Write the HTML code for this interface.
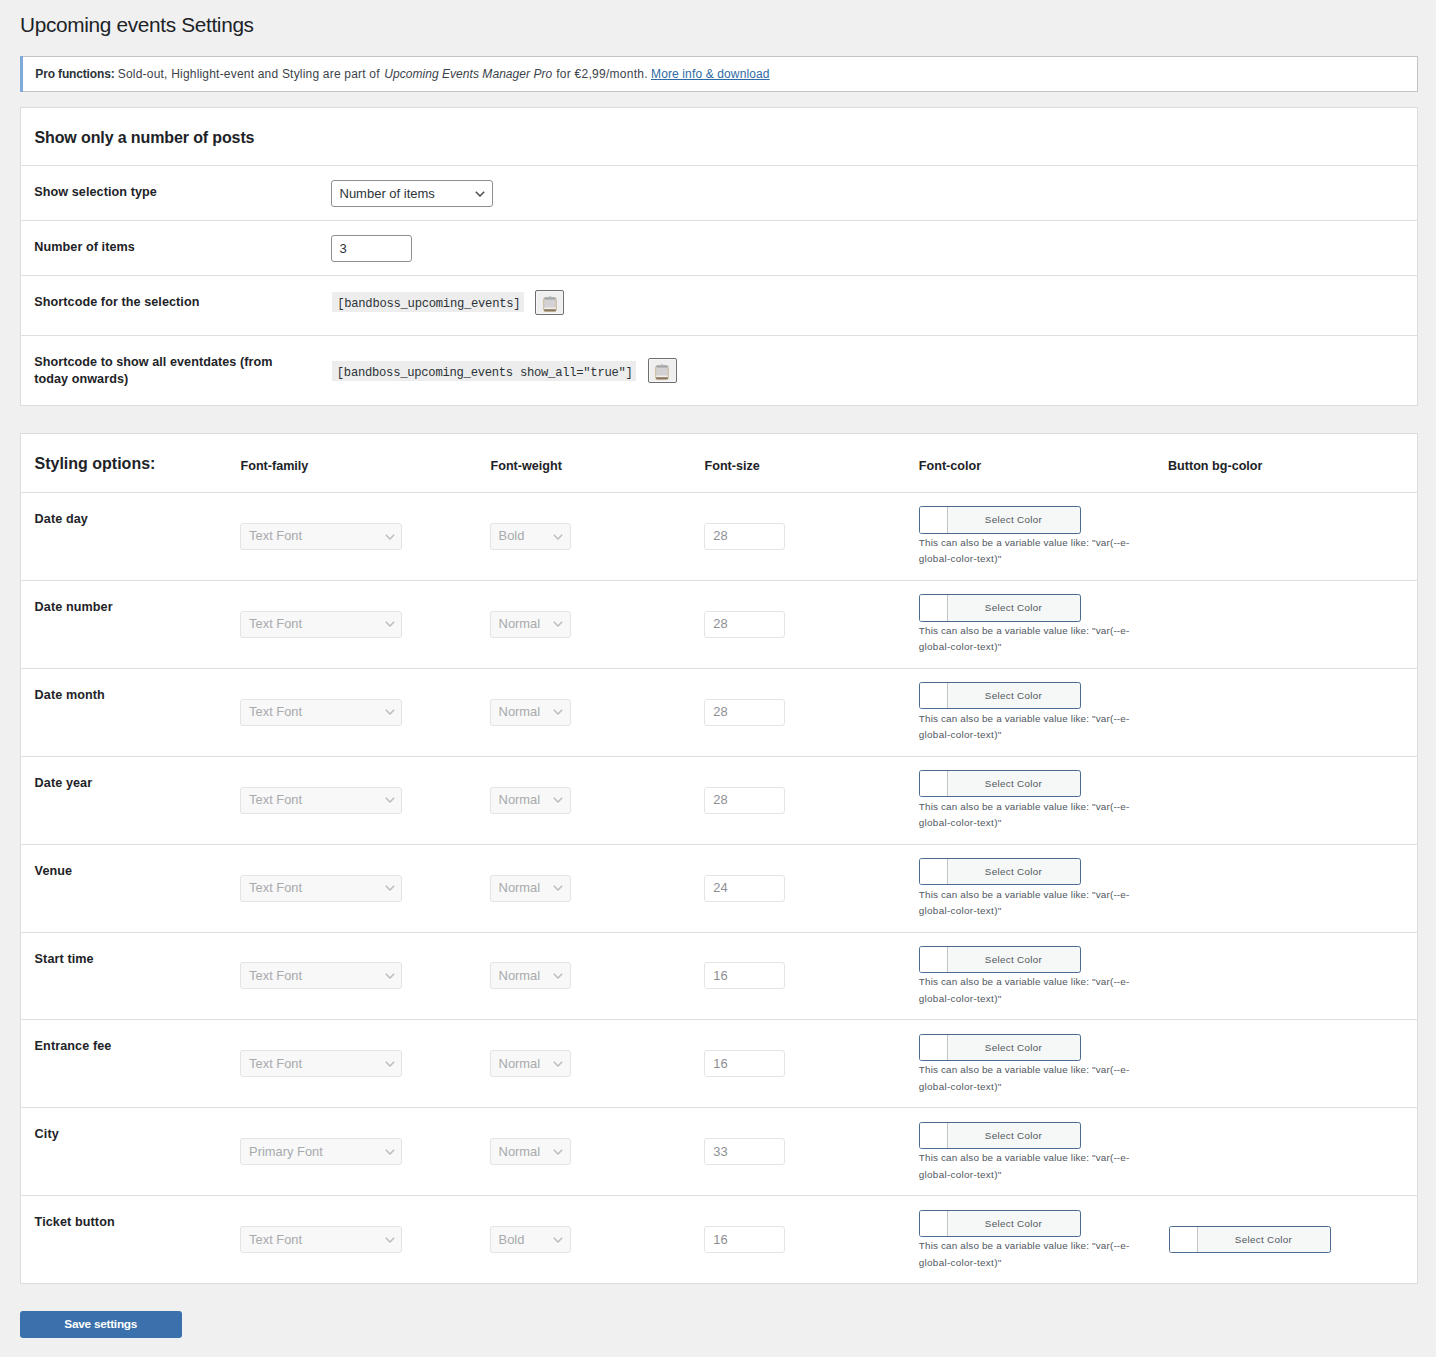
<!DOCTYPE html>
<html><head><meta charset="utf-8"><title>Upcoming events Settings</title><style>
html,body{margin:0;padding:0}
body{width:1436px;height:1357px;overflow:hidden;position:relative;background:#f0f0f1;font-family:"Liberation Sans",sans-serif;color:#1d2327}
.a{position:absolute;white-space:nowrap}
.t{position:absolute;white-space:nowrap}
.box{position:absolute;left:20px;width:1396px;background:#fff;border:1px solid #dcdcdc}
.hr{position:absolute;left:21px;width:1396px;height:1px;background:#dfdfdf}
.sel{position:absolute;box-sizing:border-box;height:27px;border:1px solid #8c8f94;border-radius:3px;background:#fff}
.dsel{position:absolute;box-sizing:border-box;height:27px;border:1px solid #e4e4e5;border-radius:3px;background:#f8f8f8}
.inp{position:absolute;box-sizing:border-box;height:27px;border:1px solid #e4e4e5;border-radius:3px;background:#fff}
.chev{position:absolute;width:10px;height:6px}
.code{position:absolute;height:20px;background:#ededed}
.cb{position:absolute;box-sizing:border-box;width:29px;height:25px;border:1px solid #6e6e6e;border-radius:2px;background:#efefef;box-shadow:inset 0 0 0 1px #f7f7f7}
.cp{position:absolute;box-sizing:border-box;width:162px;height:28px;border:1px solid #4b6b90;border-radius:2.5px;background:#f6f7f7;overflow:hidden}
.cp i{position:absolute;left:0;top:0;width:27px;height:26px;background:#fff;border-right:1px solid #c3c4c7}
.btn{position:absolute;left:20px;top:1311px;width:162px;height:27px;background:#3a70ab;border-radius:3px}
</style></head><body>
<div class="t" style="left:20.00px;top:14.59px;font-size:20.8px;line-height:20.8px;letter-spacing:-0.33px;">Upcoming events Settings</div>
<div class="a" style="left:20px;top:56px;width:1396px;height:34px;background:#fff;border:1px solid #c3c4c7;"></div>
<div class="a" style="left:20px;top:56px;width:3px;height:36px;background:#80aad8"></div>
<div class="t" style="left:35.30px;top:68.44px;font-size:12px;line-height:12px;font-weight:700;color:#2c3338;letter-spacing:-0.15px;">Pro functions:</div>
<div class="t" style="left:117.80px;top:68.44px;font-size:12px;line-height:12px;color:#3c434a;letter-spacing:0.2px;">Sold-out, Highlight-event and Styling are part of</div>
<div class="t" style="left:384.20px;top:68.44px;font-size:12px;line-height:12px;color:#3c434a;letter-spacing:0.05px;font-style:italic;">Upcoming Events Manager Pro</div>
<div class="t" style="left:556.20px;top:68.44px;font-size:12px;line-height:12px;color:#3c434a;letter-spacing:0.27px;">for €2,99/month.</div>
<div class="t" style="left:651.00px;top:68.44px;font-size:12px;line-height:12px;color:#2f6aa5;letter-spacing:0.13px;text-decoration:underline;">More info &amp; download</div>
<div class="box" style="top:107px;height:297px"></div>
<div class="t" style="left:34.50px;top:129.56px;font-size:16px;line-height:16px;font-weight:700;letter-spacing:-0.12px;">Show only a number of posts</div>
<div class="hr" style="top:165px"></div>
<div class="hr" style="top:220px"></div>
<div class="hr" style="top:275px"></div>
<div class="hr" style="top:335px"></div>
<div class="t" style="left:34.30px;top:186.33px;font-size:12.6px;line-height:12.6px;font-weight:700;letter-spacing:0.08px;">Show selection type</div>
<div class="sel" style="left:331px;top:180px;width:162px"></div>
<div class="t" style="left:339.50px;top:186.80px;font-size:13px;line-height:13px;color:#2c3338;">Number of items</div>
<svg class="chev" style="left:475.0px;top:191.0px" viewBox="0 0 10 6"><path d="M0.8 0.8 L5 5 L9.2 0.8" fill="none" stroke="#4a4f54" stroke-width="1.5"/></svg>
<div class="t" style="left:34.30px;top:241.33px;font-size:12.6px;line-height:12.6px;font-weight:700;letter-spacing:0.08px;">Number of items</div>
<div class="sel" style="left:331px;top:235px;width:81px"></div>
<div class="t" style="left:339.50px;top:241.70px;font-size:13px;line-height:13px;color:#2c3338;">3</div>
<div class="t" style="left:34.30px;top:296.33px;font-size:12.6px;line-height:12.6px;font-weight:700;letter-spacing:0.08px;">Shortcode for the selection</div>
<div class="code" style="left:332px;top:292px;width:192px"></div>
<div class="t" style="left:337.20px;top:297.95px;font-size:12.2px;line-height:12.2px;color:#2c3338;letter-spacing:-0.27px;font-family:'Liberation Mono',monospace;">[bandboss_upcoming_events]</div>
<div class="cb" style="left:535px;top:290px"><svg style="position:absolute;left:6px;top:4px" width="15" height="17" viewBox="0 0 15 17"><rect x="1.7" y="2.8" width="12.6" height="13.6" rx="1.6" fill="#d3d1d4" stroke="#c8b48e" stroke-width="0.9"/><rect x="2.2" y="12.6" width="11.6" height="1.2" fill="#fbf6ec"/><rect x="2.0" y="14.2" width="12" height="2.0" rx="0.8" fill="#8c7a62"/><rect x="2.4" y="2.6" width="11.2" height="1.8" rx="0.6" fill="#9ea3a8"/><rect x="6.6" y="1.2" width="2.8" height="2" rx="1" fill="#b3b7bb"/></svg></div>
<div class="t" style="left:34.30px;top:355.93px;font-size:12.6px;line-height:12.6px;font-weight:700;letter-spacing:0.06px;">Shortcode to show all eventdates (from</div>
<div class="t" style="left:34.30px;top:372.73px;font-size:12.6px;line-height:12.6px;font-weight:700;letter-spacing:0.06px;">today onwards)</div>
<div class="code" style="left:332px;top:361px;width:304px"></div>
<div class="t" style="left:336.80px;top:366.95px;font-size:12.2px;line-height:12.2px;color:#2c3338;letter-spacing:-0.27px;font-family:'Liberation Mono',monospace;">[bandboss_upcoming_events show_all="true"]</div>
<div class="cb" style="left:648px;top:358px"><svg style="position:absolute;left:5px;top:4px" width="15" height="17" viewBox="0 0 15 17"><rect x="1.7" y="2.8" width="12.6" height="13.6" rx="1.6" fill="#d3d1d4" stroke="#c8b48e" stroke-width="0.9"/><rect x="2.2" y="12.6" width="11.6" height="1.2" fill="#fbf6ec"/><rect x="2.0" y="14.2" width="12" height="2.0" rx="0.8" fill="#8c7a62"/><rect x="2.4" y="2.6" width="11.2" height="1.8" rx="0.6" fill="#9ea3a8"/><rect x="6.6" y="1.2" width="2.8" height="2" rx="1" fill="#b3b7bb"/></svg></div>
<div class="box" style="top:433px;height:849px"></div>
<div class="t" style="left:34.50px;top:456.46px;font-size:16px;line-height:16px;font-weight:700;">Styling options:</div>
<div class="t" style="left:240.50px;top:460.33px;font-size:12.6px;line-height:12.6px;font-weight:700;">Font-family</div>
<div class="t" style="left:490.50px;top:460.33px;font-size:12.6px;line-height:12.6px;font-weight:700;">Font-weight</div>
<div class="t" style="left:704.50px;top:460.33px;font-size:12.6px;line-height:12.6px;font-weight:700;">Font-size</div>
<div class="t" style="left:918.80px;top:460.33px;font-size:12.6px;line-height:12.6px;font-weight:700;">Font-color</div>
<div class="t" style="left:1168.00px;top:460.33px;font-size:12.6px;line-height:12.6px;font-weight:700;">Button bg-color</div>
<div class="hr" style="top:492px"></div>
<div class="t" style="left:34.60px;top:512.73px;font-size:12.6px;line-height:12.6px;font-weight:700;letter-spacing:0.1px;">Date day</div>
<div class="dsel" style="left:240px;top:523px;width:162px"></div>
<div class="t" style="left:249.10px;top:530.48px;font-size:12.9px;line-height:12.9px;color:#a7aaad;">Text Font</div>
<svg class="chev" style="left:385.0px;top:533.5px" viewBox="0 0 10 6"><path d="M0.8 0.8 L5 5 L9.2 0.8" fill="none" stroke="#bdbdbd" stroke-width="1.5"/></svg>
<div class="dsel" style="left:490px;top:523px;width:81px"></div>
<div class="t" style="left:498.60px;top:530.48px;font-size:12.9px;line-height:12.9px;color:#a7aaad;">Bold</div>
<svg class="chev" style="left:553.0px;top:533.5px" viewBox="0 0 10 6"><path d="M0.8 0.8 L5 5 L9.2 0.8" fill="none" stroke="#bdbdbd" stroke-width="1.5"/></svg>
<div class="inp" style="left:704px;top:523px;width:81px"></div>
<div class="t" style="left:713.20px;top:530.48px;font-size:12.9px;line-height:12.9px;color:#8c8f94;letter-spacing:0.2px;">28</div>
<div class="cp" style="left:919px;top:506px;height:28px"><i style="height:26px"></i></div>
<div class="t" style="left:984.80px;top:514.92px;font-size:9.9px;line-height:9.9px;color:#50575e;letter-spacing:0.29px;">Select Color</div>
<div class="t" style="left:918.80px;top:537.92px;font-size:9.9px;line-height:9.9px;color:#50575e;letter-spacing:0.16px;">This can also be a variable value like: "var(--e-</div>
<div class="t" style="left:918.80px;top:554.42px;font-size:9.9px;line-height:9.9px;color:#50575e;letter-spacing:0.3px;">global-color-text)"</div>
<div class="hr" style="top:580px"></div>
<div class="t" style="left:34.60px;top:600.73px;font-size:12.6px;line-height:12.6px;font-weight:700;letter-spacing:0.1px;">Date number</div>
<div class="dsel" style="left:240px;top:611px;width:162px"></div>
<div class="t" style="left:249.10px;top:618.38px;font-size:12.9px;line-height:12.9px;color:#a7aaad;">Text Font</div>
<svg class="chev" style="left:385.0px;top:621.4px" viewBox="0 0 10 6"><path d="M0.8 0.8 L5 5 L9.2 0.8" fill="none" stroke="#bdbdbd" stroke-width="1.5"/></svg>
<div class="dsel" style="left:490px;top:611px;width:81px"></div>
<div class="t" style="left:498.60px;top:618.38px;font-size:12.9px;line-height:12.9px;color:#a7aaad;">Normal</div>
<svg class="chev" style="left:553.0px;top:621.4px" viewBox="0 0 10 6"><path d="M0.8 0.8 L5 5 L9.2 0.8" fill="none" stroke="#bdbdbd" stroke-width="1.5"/></svg>
<div class="inp" style="left:704px;top:611px;width:81px"></div>
<div class="t" style="left:713.20px;top:618.38px;font-size:12.9px;line-height:12.9px;color:#8c8f94;letter-spacing:0.2px;">28</div>
<div class="cp" style="left:919px;top:594px;height:28px"><i style="height:26px"></i></div>
<div class="t" style="left:984.80px;top:602.92px;font-size:9.9px;line-height:9.9px;color:#50575e;letter-spacing:0.29px;">Select Color</div>
<div class="t" style="left:918.80px;top:625.82px;font-size:9.9px;line-height:9.9px;color:#50575e;letter-spacing:0.16px;">This can also be a variable value like: "var(--e-</div>
<div class="t" style="left:918.80px;top:642.32px;font-size:9.9px;line-height:9.9px;color:#50575e;letter-spacing:0.3px;">global-color-text)"</div>
<div class="hr" style="top:668px"></div>
<div class="t" style="left:34.60px;top:688.73px;font-size:12.6px;line-height:12.6px;font-weight:700;letter-spacing:0.1px;">Date month</div>
<div class="dsel" style="left:240px;top:699px;width:162px"></div>
<div class="t" style="left:249.10px;top:706.28px;font-size:12.9px;line-height:12.9px;color:#a7aaad;">Text Font</div>
<svg class="chev" style="left:385.0px;top:709.3px" viewBox="0 0 10 6"><path d="M0.8 0.8 L5 5 L9.2 0.8" fill="none" stroke="#bdbdbd" stroke-width="1.5"/></svg>
<div class="dsel" style="left:490px;top:699px;width:81px"></div>
<div class="t" style="left:498.60px;top:706.28px;font-size:12.9px;line-height:12.9px;color:#a7aaad;">Normal</div>
<svg class="chev" style="left:553.0px;top:709.3px" viewBox="0 0 10 6"><path d="M0.8 0.8 L5 5 L9.2 0.8" fill="none" stroke="#bdbdbd" stroke-width="1.5"/></svg>
<div class="inp" style="left:704px;top:699px;width:81px"></div>
<div class="t" style="left:713.20px;top:706.28px;font-size:12.9px;line-height:12.9px;color:#8c8f94;letter-spacing:0.2px;">28</div>
<div class="cp" style="left:919px;top:682px;height:27px"><i style="height:25px"></i></div>
<div class="t" style="left:984.80px;top:690.92px;font-size:9.9px;line-height:9.9px;color:#50575e;letter-spacing:0.29px;">Select Color</div>
<div class="t" style="left:918.80px;top:713.72px;font-size:9.9px;line-height:9.9px;color:#50575e;letter-spacing:0.16px;">This can also be a variable value like: "var(--e-</div>
<div class="t" style="left:918.80px;top:730.22px;font-size:9.9px;line-height:9.9px;color:#50575e;letter-spacing:0.3px;">global-color-text)"</div>
<div class="hr" style="top:756px"></div>
<div class="t" style="left:34.60px;top:776.73px;font-size:12.6px;line-height:12.6px;font-weight:700;letter-spacing:0.1px;">Date year</div>
<div class="dsel" style="left:240px;top:787px;width:162px"></div>
<div class="t" style="left:249.10px;top:794.18px;font-size:12.9px;line-height:12.9px;color:#a7aaad;">Text Font</div>
<svg class="chev" style="left:385.0px;top:797.2px" viewBox="0 0 10 6"><path d="M0.8 0.8 L5 5 L9.2 0.8" fill="none" stroke="#bdbdbd" stroke-width="1.5"/></svg>
<div class="dsel" style="left:490px;top:787px;width:81px"></div>
<div class="t" style="left:498.60px;top:794.18px;font-size:12.9px;line-height:12.9px;color:#a7aaad;">Normal</div>
<svg class="chev" style="left:553.0px;top:797.2px" viewBox="0 0 10 6"><path d="M0.8 0.8 L5 5 L9.2 0.8" fill="none" stroke="#bdbdbd" stroke-width="1.5"/></svg>
<div class="inp" style="left:704px;top:787px;width:81px"></div>
<div class="t" style="left:713.20px;top:794.18px;font-size:12.9px;line-height:12.9px;color:#8c8f94;letter-spacing:0.2px;">28</div>
<div class="cp" style="left:919px;top:770px;height:27px"><i style="height:25px"></i></div>
<div class="t" style="left:984.80px;top:778.92px;font-size:9.9px;line-height:9.9px;color:#50575e;letter-spacing:0.29px;">Select Color</div>
<div class="t" style="left:918.80px;top:801.62px;font-size:9.9px;line-height:9.9px;color:#50575e;letter-spacing:0.16px;">This can also be a variable value like: "var(--e-</div>
<div class="t" style="left:918.80px;top:818.12px;font-size:9.9px;line-height:9.9px;color:#50575e;letter-spacing:0.3px;">global-color-text)"</div>
<div class="hr" style="top:844px"></div>
<div class="t" style="left:34.60px;top:864.73px;font-size:12.6px;line-height:12.6px;font-weight:700;letter-spacing:0.1px;">Venue</div>
<div class="dsel" style="left:240px;top:875px;width:162px"></div>
<div class="t" style="left:249.10px;top:882.08px;font-size:12.9px;line-height:12.9px;color:#a7aaad;">Text Font</div>
<svg class="chev" style="left:385.0px;top:885.1px" viewBox="0 0 10 6"><path d="M0.8 0.8 L5 5 L9.2 0.8" fill="none" stroke="#bdbdbd" stroke-width="1.5"/></svg>
<div class="dsel" style="left:490px;top:875px;width:81px"></div>
<div class="t" style="left:498.60px;top:882.08px;font-size:12.9px;line-height:12.9px;color:#a7aaad;">Normal</div>
<svg class="chev" style="left:553.0px;top:885.1px" viewBox="0 0 10 6"><path d="M0.8 0.8 L5 5 L9.2 0.8" fill="none" stroke="#bdbdbd" stroke-width="1.5"/></svg>
<div class="inp" style="left:704px;top:875px;width:81px"></div>
<div class="t" style="left:713.20px;top:882.08px;font-size:12.9px;line-height:12.9px;color:#8c8f94;letter-spacing:0.2px;">24</div>
<div class="cp" style="left:919px;top:858px;height:27px"><i style="height:25px"></i></div>
<div class="t" style="left:984.80px;top:866.92px;font-size:9.9px;line-height:9.9px;color:#50575e;letter-spacing:0.29px;">Select Color</div>
<div class="t" style="left:918.80px;top:889.52px;font-size:9.9px;line-height:9.9px;color:#50575e;letter-spacing:0.16px;">This can also be a variable value like: "var(--e-</div>
<div class="t" style="left:918.80px;top:906.02px;font-size:9.9px;line-height:9.9px;color:#50575e;letter-spacing:0.3px;">global-color-text)"</div>
<div class="hr" style="top:932px"></div>
<div class="t" style="left:34.60px;top:952.73px;font-size:12.6px;line-height:12.6px;font-weight:700;letter-spacing:0.1px;">Start time</div>
<div class="dsel" style="left:240px;top:962px;width:162px"></div>
<div class="t" style="left:249.10px;top:969.98px;font-size:12.9px;line-height:12.9px;color:#a7aaad;">Text Font</div>
<svg class="chev" style="left:385.0px;top:973.0px" viewBox="0 0 10 6"><path d="M0.8 0.8 L5 5 L9.2 0.8" fill="none" stroke="#bdbdbd" stroke-width="1.5"/></svg>
<div class="dsel" style="left:490px;top:962px;width:81px"></div>
<div class="t" style="left:498.60px;top:969.98px;font-size:12.9px;line-height:12.9px;color:#a7aaad;">Normal</div>
<svg class="chev" style="left:553.0px;top:973.0px" viewBox="0 0 10 6"><path d="M0.8 0.8 L5 5 L9.2 0.8" fill="none" stroke="#bdbdbd" stroke-width="1.5"/></svg>
<div class="inp" style="left:704px;top:962px;width:81px"></div>
<div class="t" style="left:713.20px;top:969.98px;font-size:12.9px;line-height:12.9px;color:#8c8f94;letter-spacing:0.2px;">16</div>
<div class="cp" style="left:919px;top:946px;height:27px"><i style="height:25px"></i></div>
<div class="t" style="left:984.80px;top:954.92px;font-size:9.9px;line-height:9.9px;color:#50575e;letter-spacing:0.29px;">Select Color</div>
<div class="t" style="left:918.80px;top:977.42px;font-size:9.9px;line-height:9.9px;color:#50575e;letter-spacing:0.16px;">This can also be a variable value like: "var(--e-</div>
<div class="t" style="left:918.80px;top:993.92px;font-size:9.9px;line-height:9.9px;color:#50575e;letter-spacing:0.3px;">global-color-text)"</div>
<div class="hr" style="top:1019px"></div>
<div class="t" style="left:34.60px;top:1039.73px;font-size:12.6px;line-height:12.6px;font-weight:700;letter-spacing:0.1px;">Entrance fee</div>
<div class="dsel" style="left:240px;top:1050px;width:162px"></div>
<div class="t" style="left:249.10px;top:1057.88px;font-size:12.9px;line-height:12.9px;color:#a7aaad;">Text Font</div>
<svg class="chev" style="left:385.0px;top:1060.9px" viewBox="0 0 10 6"><path d="M0.8 0.8 L5 5 L9.2 0.8" fill="none" stroke="#bdbdbd" stroke-width="1.5"/></svg>
<div class="dsel" style="left:490px;top:1050px;width:81px"></div>
<div class="t" style="left:498.60px;top:1057.88px;font-size:12.9px;line-height:12.9px;color:#a7aaad;">Normal</div>
<svg class="chev" style="left:553.0px;top:1060.9px" viewBox="0 0 10 6"><path d="M0.8 0.8 L5 5 L9.2 0.8" fill="none" stroke="#bdbdbd" stroke-width="1.5"/></svg>
<div class="inp" style="left:704px;top:1050px;width:81px"></div>
<div class="t" style="left:713.20px;top:1057.88px;font-size:12.9px;line-height:12.9px;color:#8c8f94;letter-spacing:0.2px;">16</div>
<div class="cp" style="left:919px;top:1034px;height:27px"><i style="height:25px"></i></div>
<div class="t" style="left:984.80px;top:1042.92px;font-size:9.9px;line-height:9.9px;color:#50575e;letter-spacing:0.29px;">Select Color</div>
<div class="t" style="left:918.80px;top:1065.32px;font-size:9.9px;line-height:9.9px;color:#50575e;letter-spacing:0.16px;">This can also be a variable value like: "var(--e-</div>
<div class="t" style="left:918.80px;top:1081.82px;font-size:9.9px;line-height:9.9px;color:#50575e;letter-spacing:0.3px;">global-color-text)"</div>
<div class="hr" style="top:1107px"></div>
<div class="t" style="left:34.60px;top:1127.73px;font-size:12.6px;line-height:12.6px;font-weight:700;letter-spacing:0.1px;">City</div>
<div class="dsel" style="left:240px;top:1138px;width:162px"></div>
<div class="t" style="left:249.10px;top:1145.78px;font-size:12.9px;line-height:12.9px;color:#a7aaad;">Primary Font</div>
<svg class="chev" style="left:385.0px;top:1148.8px" viewBox="0 0 10 6"><path d="M0.8 0.8 L5 5 L9.2 0.8" fill="none" stroke="#bdbdbd" stroke-width="1.5"/></svg>
<div class="dsel" style="left:490px;top:1138px;width:81px"></div>
<div class="t" style="left:498.60px;top:1145.78px;font-size:12.9px;line-height:12.9px;color:#a7aaad;">Normal</div>
<svg class="chev" style="left:553.0px;top:1148.8px" viewBox="0 0 10 6"><path d="M0.8 0.8 L5 5 L9.2 0.8" fill="none" stroke="#bdbdbd" stroke-width="1.5"/></svg>
<div class="inp" style="left:704px;top:1138px;width:81px"></div>
<div class="t" style="left:713.20px;top:1145.78px;font-size:12.9px;line-height:12.9px;color:#8c8f94;letter-spacing:0.2px;">33</div>
<div class="cp" style="left:919px;top:1122px;height:27px"><i style="height:25px"></i></div>
<div class="t" style="left:984.80px;top:1130.92px;font-size:9.9px;line-height:9.9px;color:#50575e;letter-spacing:0.29px;">Select Color</div>
<div class="t" style="left:918.80px;top:1153.22px;font-size:9.9px;line-height:9.9px;color:#50575e;letter-spacing:0.16px;">This can also be a variable value like: "var(--e-</div>
<div class="t" style="left:918.80px;top:1169.72px;font-size:9.9px;line-height:9.9px;color:#50575e;letter-spacing:0.3px;">global-color-text)"</div>
<div class="hr" style="top:1195px"></div>
<div class="t" style="left:34.60px;top:1215.73px;font-size:12.6px;line-height:12.6px;font-weight:700;letter-spacing:0.1px;">Ticket button</div>
<div class="dsel" style="left:240px;top:1226px;width:162px"></div>
<div class="t" style="left:249.10px;top:1233.68px;font-size:12.9px;line-height:12.9px;color:#a7aaad;">Text Font</div>
<svg class="chev" style="left:385.0px;top:1236.7px" viewBox="0 0 10 6"><path d="M0.8 0.8 L5 5 L9.2 0.8" fill="none" stroke="#bdbdbd" stroke-width="1.5"/></svg>
<div class="dsel" style="left:490px;top:1226px;width:81px"></div>
<div class="t" style="left:498.60px;top:1233.68px;font-size:12.9px;line-height:12.9px;color:#a7aaad;">Bold</div>
<svg class="chev" style="left:553.0px;top:1236.7px" viewBox="0 0 10 6"><path d="M0.8 0.8 L5 5 L9.2 0.8" fill="none" stroke="#bdbdbd" stroke-width="1.5"/></svg>
<div class="inp" style="left:704px;top:1226px;width:81px"></div>
<div class="t" style="left:713.20px;top:1233.68px;font-size:12.9px;line-height:12.9px;color:#8c8f94;letter-spacing:0.2px;">16</div>
<div class="cp" style="left:919px;top:1210px;height:27px"><i style="height:25px"></i></div>
<div class="t" style="left:984.80px;top:1218.92px;font-size:9.9px;line-height:9.9px;color:#50575e;letter-spacing:0.29px;">Select Color</div>
<div class="t" style="left:918.80px;top:1241.12px;font-size:9.9px;line-height:9.9px;color:#50575e;letter-spacing:0.16px;">This can also be a variable value like: "var(--e-</div>
<div class="t" style="left:918.80px;top:1257.62px;font-size:9.9px;line-height:9.9px;color:#50575e;letter-spacing:0.3px;">global-color-text)"</div>
<div class="cp" style="left:1169px;top:1226px;height:27px"><i style="height:25px"></i></div>
<div class="t" style="left:1234.80px;top:1234.92px;font-size:9.9px;line-height:9.9px;color:#50575e;letter-spacing:0.29px;">Select Color</div>
<div class="btn"></div>
<div class="t" style="left:64.30px;top:1319.41px;font-size:11.8px;line-height:11.8px;font-weight:700;color:#fff;letter-spacing:-0.25px;">Save settings</div>
</body></html>
